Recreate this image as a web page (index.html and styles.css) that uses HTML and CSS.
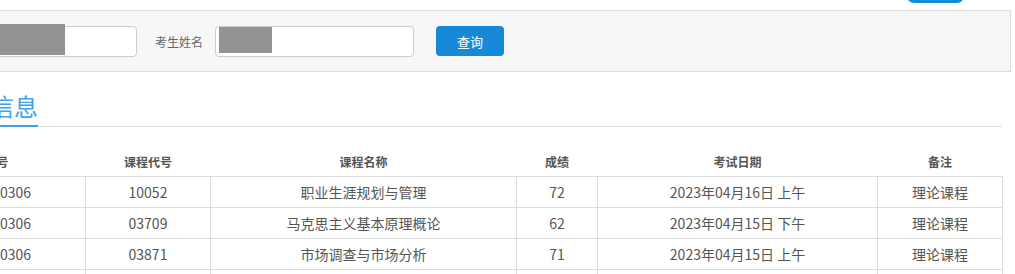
FILE: index.html
```html
<!DOCTYPE html>
<html lang="zh-CN">
<head>
    <meta charset="UTF-8">
    <meta name="viewport" content="width=device-width, initial-scale=1.0">
    <title>成绩查询</title>
    <link rel="stylesheet" href="styles.css">
</head>
<body>
    <div class="page">
        <div class="top-bar">
            <a class="top-btn" href="#"></a>
        </div>

        <div class="search-panel">
            <span class="label">准考证号</span>
            <div class="input-box"><span class="mask mask-id"></span></div>
            <span class="label label-name">考生姓名</span>
            <div class="input-box input-name"><span class="mask mask-name"></span></div>
            <button class="btn-query">查询</button>
        </div>

        <div class="content">
            <div class="tab-head">
                <h2>考试成绩信息</h2>
            </div>

            <table class="score-table">
                <colgroup>
                    <col class="c-id">
                    <col class="c-code">
                    <col class="c-name">
                    <col class="c-score">
                    <col class="c-date">
                    <col class="c-note">
                </colgroup>
                <thead>
                    <tr>
                        <th>准考证号</th>
                        <th>课程代号</th>
                        <th>课程名称</th>
                        <th>成绩</th>
                        <th>考试日期</th>
                        <th>备注</th>
                    </tr>
                </thead>
                <tbody>
                    <tr>
                        <td>360121100306</td>
                        <td>10052</td>
                        <td>职业生涯规划与管理</td>
                        <td>72</td>
                        <td>2023年04月16日 上午</td>
                        <td>理论课程</td>
                    </tr>
                    <tr>
                        <td>360121100306</td>
                        <td>03709</td>
                        <td>马克思主义基本原理概论</td>
                        <td>62</td>
                        <td>2023年04月15日 下午</td>
                        <td>理论课程</td>
                    </tr>
                    <tr>
                        <td>360121100306</td>
                        <td>03871</td>
                        <td>市场调查与市场分析</td>
                        <td>71</td>
                        <td>2023年04月15日 上午</td>
                        <td>理论课程</td>
                    </tr>
                    <tr>
                        <td>360121100306</td>
                        <td>00054</td>
                        <td>管理学原理</td>
                        <td>68</td>
                        <td>2023年04月16日 下午</td>
                        <td>理论课程</td>
                    </tr>
                </tbody>
            </table>
        </div>
    </div>
</body>
</html>
```

FILE: styles.css
```css
body {
    margin: 0;
    padding: 0;
    background: #fff;
    font-family: "Noto Sans CJK SC", "Noto Sans", sans-serif;
    color: #555;
    overflow: hidden;
}
.page {
    width: 1211px;
    margin-left: -200px;
}
.top-bar {
    height: 10px;
    display: flex;
    justify-content: flex-end;
    padding-right: 47px;
}
.top-btn {
    display: block;
    width: 57px;
    height: 20px;
    margin-top: -17px;
    border-radius: 7px;
    background: #1789d9;
}
.search-panel {
    display: flex;
    align-items: center;
    height: 60px;
    padding-left: 76px;
    border: 1px solid #ddd;
    background: #f7f7f7;
}
.label {
    font-size: 12px;
    color: #666;
    margin-right: 12px;
    white-space: nowrap;
}
.label-name {
    margin-left: 18px;
}
.input-box {
    position: relative;
    width: 198px;
    height: 29px;
    border: 1px solid #ccc;
    border-radius: 4px;
    background: #fff;
}
.input-name {
    width: 197px;
}
.mask {
    position: absolute;
    background: #939393;
}
.mask-id {
    left: 3px;
    top: -3px;
    width: 124px;
    height: 31px;
}
.mask-name {
    left: 3px;
    top: 0;
    width: 53px;
    height: 26px;
}
.btn-query {
    width: 68px;
    height: 30px;
    margin-left: 22px;
    border: none;
    border-radius: 4px;
    background: #1789d9;
    color: #fff;
    font-family: inherit;
    font-size: 13px;
    cursor: pointer;
}
.content {
    width: 1119px;
    margin-left: 83px;
}
.tab-head {
    margin-top: 18px;
    border-bottom: 1px solid #ddd;
    display: flex;
}
.tab-head h2 {
    margin: 0 0 -1px 11px;
    padding-bottom: 3px;
    font-size: 24px;
    font-weight: normal;
    line-height: 32px;
    color: #41a3e8;
    border-bottom: 2px solid #41a3e8;
}
.score-table {
    width: 1119px;
    margin-top: 19px;
    border-collapse: collapse;
    table-layout: fixed;
}
.c-id { width: 202px; }
.c-code { width: 125px; }
.c-name { width: 306px; }
.c-score { width: 81px; }
.c-date { width: 280px; }
.c-note { width: 125px; }
.score-table th {
    height: 30px;
    padding: 0;
    font-size: 12px;
    font-weight: bold;
    color: #555;
    text-align: center;
    border-bottom: 1px solid #ddd;
}
.score-table td {
    height: 30px;
    padding: 0;
    font-size: 14px;
    color: #555;
    text-align: center;
    border: 1px solid #ddd;
    white-space: nowrap;
}
```
